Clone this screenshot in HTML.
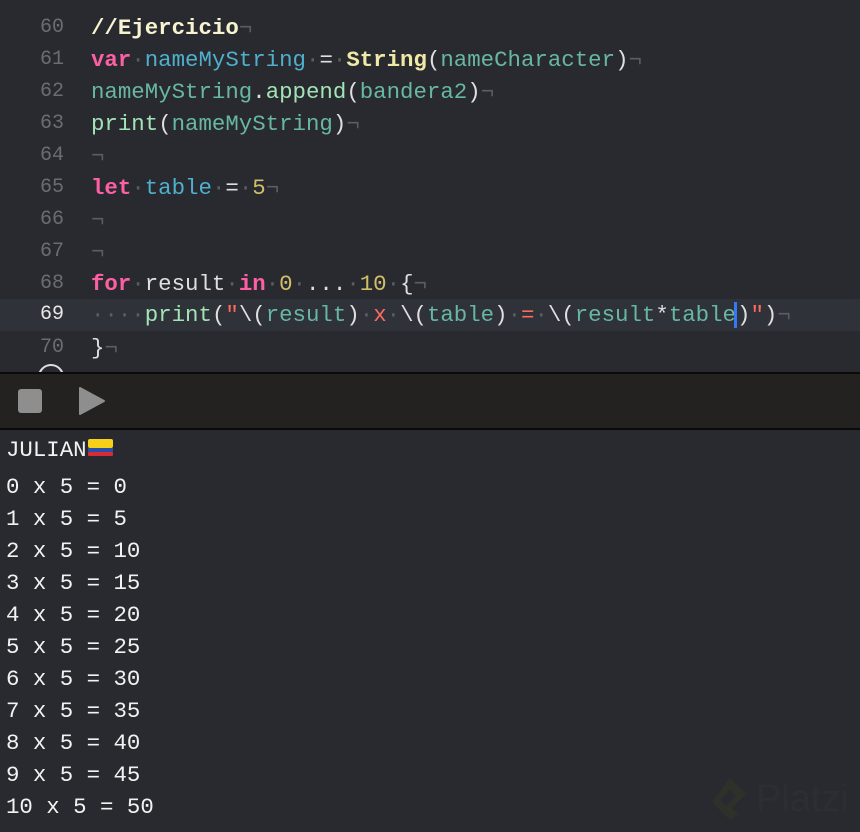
<!DOCTYPE html>
<html><head><meta charset="utf-8"><style>
body{margin:0;width:860px;height:832px;background:#292a30;overflow:hidden;position:relative;font-family:"Liberation Mono","DejaVu Sans Mono",monospace;}
.l{position:absolute;left:0;width:860px;height:32px;line-height:32px;font-size:22.4px;white-space:pre;}
.n{position:absolute;left:0;width:64px;text-align:right;color:#6c6c70;font-size:20px;}
.c{position:absolute;left:91px;color:#dfdfe0;}
.k{color:#fc5fa3;font-weight:bold}
.b{color:#4eb0cc}
.t{color:#67b7a4}
.g{color:#a3e4b6}
.y{color:#f0e9a6;font-weight:bold}
.num{color:#d0bf69}
.r{color:#fc6a5d}
.d{color:#5b5d63}
.cm{color:#f7f3d0;font-weight:bold}
.o{position:absolute;left:6px;height:32px;line-height:32px;font-size:22.4px;color:#f2f2f2;white-space:pre;}
</style></head><body>
<div class="l" style="top:-20px"><span class="n">59</span></div>
<div class="l" style="top:12px"><span class="n">60</span><span class="c"><span class="cm">//Ejercicio</span><span class="d">¬</span></span></div>
<div class="l" style="top:44px"><span class="n">61</span><span class="c"><span class="k">var</span><span class="d">·</span><span class="b">nameMyString</span><span class="d">·</span>=<span class="d">·</span><span class="y">String</span>(<span class="t">nameCharacter</span>)<span class="d">¬</span></span></div>
<div class="l" style="top:76px"><span class="n">62</span><span class="c"><span class="t">nameMyString</span>.<span class="g">append</span>(<span class="t">bandera2</span>)<span class="d">¬</span></span></div>
<div class="l" style="top:108px"><span class="n">63</span><span class="c"><span class="g">print</span>(<span class="t">nameMyString</span>)<span class="d">¬</span></span></div>
<div class="l" style="top:140px"><span class="n">64</span><span class="c"><span class="d">¬</span></span></div>
<div class="l" style="top:172px"><span class="n">65</span><span class="c"><span class="k">let</span><span class="d">·</span><span class="b">table</span><span class="d">·</span>=<span class="d">·</span><span class="num">5</span><span class="d">¬</span></span></div>
<div class="l" style="top:204px"><span class="n">66</span><span class="c"><span class="d">¬</span></span></div>
<div class="l" style="top:236px"><span class="n">67</span><span class="c"><span class="d">¬</span></span></div>
<div class="l" style="top:268px"><span class="n">68</span><span class="c"><span class="k">for</span><span class="d">·</span>result<span class="d">·</span><span class="k">in</span><span class="d">·</span><span class="num">0</span><span class="d">·</span>...<span class="d">·</span><span class="num">10</span><span class="d">·</span>{<span class="d">¬</span></span></div>
<div class="l" style="top:299px;background:#2f3239"><span class="n" style="color:#e8e8e8">69</span><span class="c"><span class="d">····</span><span class="g">print</span>(<span class="r">"</span>\(<span class="t">result</span>)<span class="d">·</span><span class="r">x</span><span class="d">·</span>\(<span class="t">table</span>)<span class="d">·</span><span class="r">=</span><span class="d">·</span>\(<span class="t">result</span>*<span class="t">table</span><span style="border-left:3px solid #3478f6;margin-left:-2px">)</span><span class="r">"</span>)<span class="d">¬</span></span></div>
<div class="l" style="top:332px"><span class="n">70</span><span class="c">}<span class="d">¬</span></span></div>
<div style="position:absolute;left:38px;top:364px;width:26px;height:26px;border:2px solid #ddd;border-radius:50%;box-sizing:border-box"></div>
<div style="position:absolute;left:0;top:372px;width:860px;height:58px;background:#232220;border-top:2px solid #0a0a0a;border-bottom:2px solid #0a0a0a;box-sizing:border-box"></div>
<div style="position:absolute;left:18px;top:389px;width:24px;height:24px;background:#8e8e8e;border-radius:3px"></div>
<svg style="position:absolute;left:78px;top:386px" width="28" height="30"><path d="M2 2 L26 15 L2 28 Z" fill="#8e8e8e" stroke="#8e8e8e" stroke-linejoin="round" stroke-width="2"/></svg>
<div class="o" style="top:434px">JULIAN<svg width="28" height="20" style="vertical-align:-2px"><rect x="1" y="1" width="25" height="9" rx="2" fill="#f7d117"/><rect x="1" y="10" width="25" height="4" fill="#2a4fa8"/><rect x="1" y="14" width="25" height="4" rx="1" fill="#d92b35"/></svg></div>
<div class="o" style="top:471px">0 x 5 = 0</div>
<div class="o" style="top:503px">1 x 5 = 5</div>
<div class="o" style="top:535px">2 x 5 = 10</div>
<div class="o" style="top:567px">3 x 5 = 15</div>
<div class="o" style="top:599px">4 x 5 = 20</div>
<div class="o" style="top:631px">5 x 5 = 25</div>
<div class="o" style="top:663px">6 x 5 = 30</div>
<div class="o" style="top:695px">7 x 5 = 35</div>
<div class="o" style="top:727px">8 x 5 = 40</div>
<div class="o" style="top:759px">9 x 5 = 45</div>
<div class="o" style="top:791px">10 x 5 = 50</div>
<svg style="position:absolute;left:706px;top:774px" width="48" height="50"><path d="M24 4 L40 20 L26 34 L32 40 L24 46 L6 28 Z M24 16 L14 26 L20 32 L30 22 Z" fill="#2e3029" fill-rule="evenodd"/></svg>
<div style="position:absolute;left:756px;top:778px;font-family:'Liberation Sans',sans-serif;font-size:38px;color:#2c2e34">Platzi</div>
</body></html>
